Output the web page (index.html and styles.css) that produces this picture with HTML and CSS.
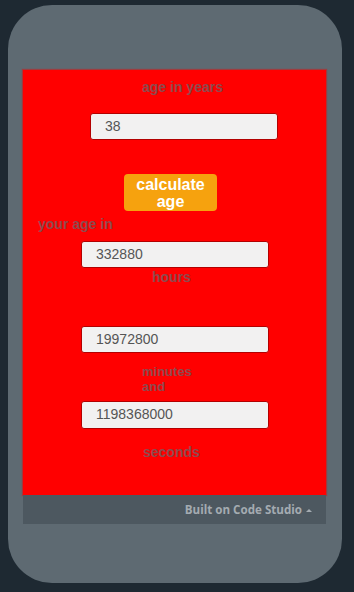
FILE: index.html
```html
<!DOCTYPE html>
<html>
<head>
<meta charset="utf-8">
<link rel="stylesheet" href="styles.css">
</head>
<body>
<div class="phone">
  <div class="screen">
    <div class="app">
      <div class="label l-years">age in years</div>
      <div class="field f-years">38</div>
      <div class="btn">calculate<br>age</div>
      <div class="label l-your">your age in</div>
      <div class="field f-hours">332880</div>
      <div class="label l-hours">hours</div>
      <div class="field f-minutes">19972800</div>
      <div class="label l-minutes">minutes<br>and</div>
      <div class="field f-seconds">1198368000</div>
      <div class="label l-seconds">seconds</div>
    </div>
    <div class="footer">Built on Code Studio <span class="caret"></span></div>
  </div>
</div>
</body>
</html>
```

FILE: styles.css
```css
html, body {
  margin: 0;
  padding: 0;
  background: #1e2932;
}
body {
  width: 354px;
  height: 592px;
  padding: 5px 0 0 8px;
  box-sizing: border-box;
  font-family: "Liberation Sans", Arial, sans-serif;
}
.phone {
  width: 334px;
  height: 578px;
  background: #5e6a72;
  border-radius: 44px;
  padding: 65px 0 0 15px;
  box-sizing: border-box;
}
.screen {
  width: 303px;
}
.app {
  background: #ff0000;
  height: 425px;
  display: flex;
  flex-direction: column;
  align-items: flex-start;
  box-shadow: 0 0 1px 1px rgba(200, 30, 30, 0.6);
}
.label {
  color: #8e4a4e;
  font-weight: bold;
  font-size: 14px;
  line-height: 16px;
}
.field {
  width: 188px;
  height: 27px;
  box-sizing: border-box;
  background: #f2f1f1;
  border: 1px solid #b30000;
  border-radius: 3px;
  color: #555;
  font-size: 14px;
  line-height: 25px;
  padding-left: 14px;
}
.btn {
  width: 93px;
  height: 37px;
  box-sizing: border-box;
  background: #f6a20e;
  border-radius: 4px;
  color: #fff;
  font-weight: bold;
  font-size: 16px;
  line-height: 17px;
  text-align: center;
  padding-top: 2px;
  margin: 34px 0 0 101px;
}
.l-years { margin: 9px 0 0 119px; }
.f-years { margin: 18px 0 0 67px; padding-left: 14px; }
.l-your { margin: 5px 0 0 15px; }
.f-hours { margin: 9px 0 0 58px; }
.l-hours { margin: 1px 0 0 129px; }
.f-minutes { margin: 41px 0 0 58px; }
.l-minutes { margin: 11px 0 0 119px; font-size: 13px; line-height: 15px; }
.f-seconds { margin: 7px 0 0 58px; height: 28px; }
.l-seconds { margin: 15px 0 0 120px; }
.footer {
  height: 29px;
  background: #4d5860;
  color: #a4abb1;
  font-family: "Open Sans", sans-serif;
  font-weight: bold;
  font-size: 11.6px;
  line-height: 29px;
  text-align: right;
  padding-right: 14px;
}
.caret {
  display: inline-block;
  width: 0;
  height: 0;
  border-left: 3px solid transparent;
  border-right: 3px solid transparent;
  border-bottom: 3px solid #a4abb1;
  vertical-align: middle;
  margin-left: 1px;
}
```
